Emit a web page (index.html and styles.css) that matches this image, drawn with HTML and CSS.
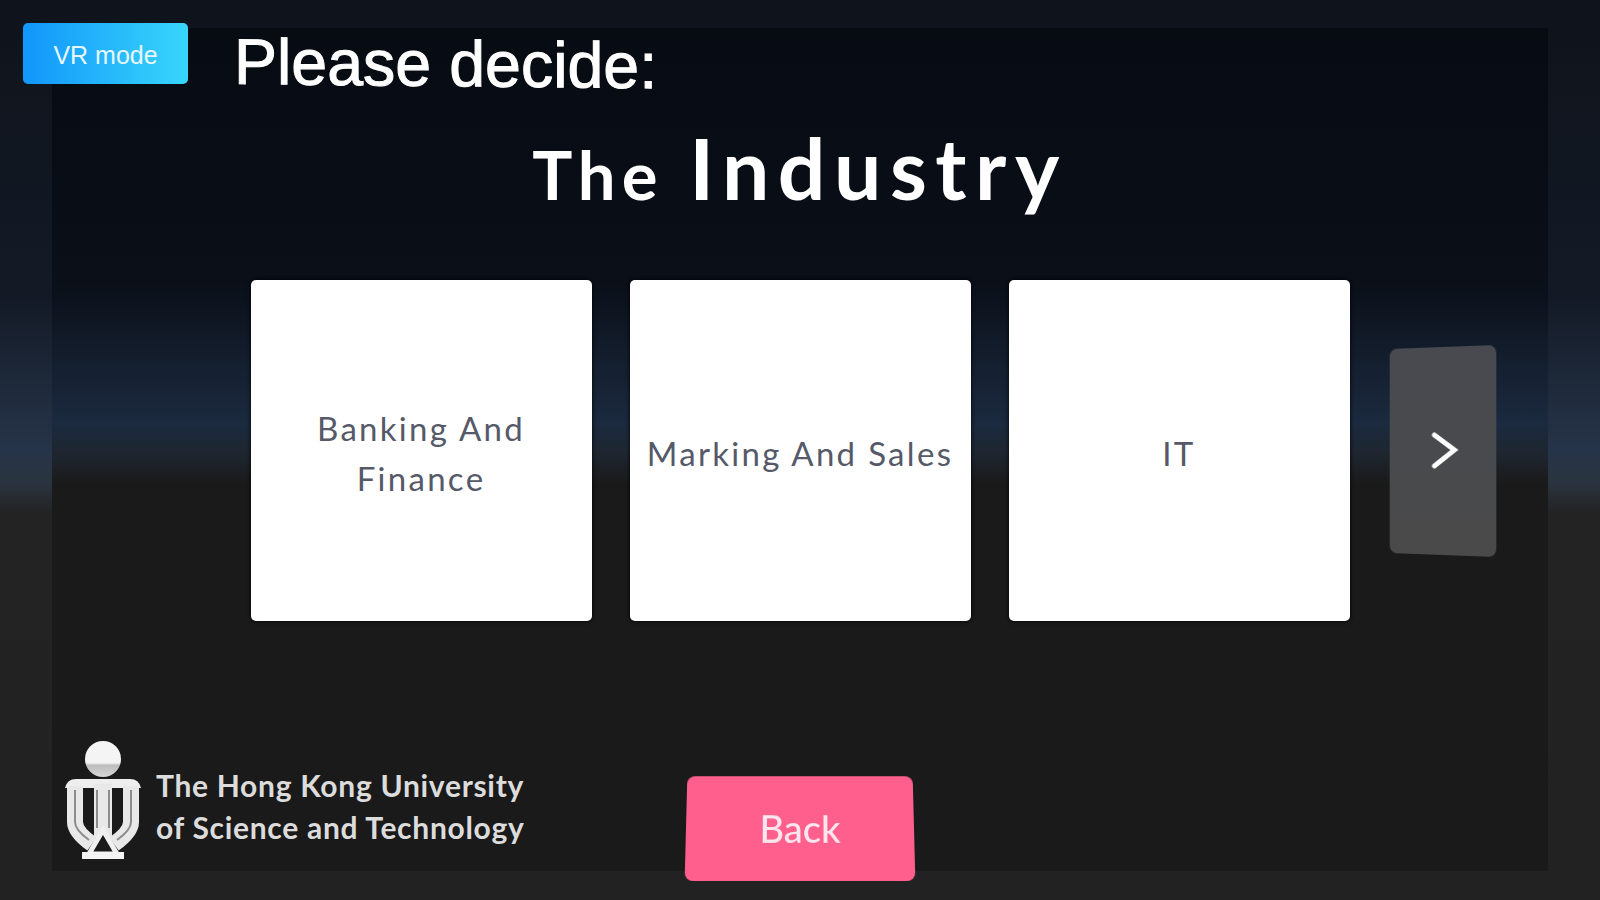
FILE: index.html
```html
<!DOCTYPE html>
<html lang="en">
<head>
    <meta charset="UTF-8">
    <meta name="viewport" content="width=device-width, initial-scale=1.0">
    <title>Please decide</title>
    <link rel="stylesheet" href="styles.css">
</head>
<body>
    <div class="panel"></div>
    <main class="stage">
        <header class="top">
            <button class="vr-btn">VR mode</button>
            <h2 class="prompt">Please decide:</h2>
        </header>
        <h1 class="title"><span class="title-the">The</span> <span class="title-main">Industry</span></h1>
        <section class="choices">
            <div class="cards">
                <div class="card">Banking And<br>Finance</div>
                <div class="card">Marking And Sales</div>
                <div class="card">IT</div>
            </div>
            <button class="next-btn">
                <svg width="28" height="38" viewBox="0 0 28 38" fill="none" stroke="#fff" stroke-width="5" stroke-linecap="round" stroke-linejoin="miter">
                    <path d="M3 3 L24 18 L3 34"/>
                </svg>
            </button>
        </section>
        <footer class="bottom">
            <div class="logo">
                <svg class="logo-mark" width="80" height="124" viewBox="0 0 80 124">
                    <defs>
                        <linearGradient id="ball" x1="0" y1="0" x2="0" y2="1">
                            <stop offset="0.6" stop-color="#f4f4f4"/>
                            <stop offset="0.68" stop-color="#bdbdbd"/>
                            <stop offset="1" stop-color="#d8d8d8"/>
                        </linearGradient>
                    </defs>
                    <circle cx="39" cy="19" r="18" fill="url(#ball)"/>
                    <path d="M1 48 Q3 39 12 39 H66 Q75 39 77 48 Z" fill="#eee"/>
                    <g fill="none" stroke="#e8e8e8" stroke-width="16">
                        <path d="M11 46 V82 Q11 92 28 104"/>
                        <path d="M67 46 V82 Q67 92 50 104"/>
                    </g>
                    <path d="M39 44 V98" fill="none" stroke="#e8e8e8" stroke-width="18"/>
                    <g fill="none" stroke="#8c8c8c" stroke-width="2">
                        <path d="M11 50 V82 Q11 90 25 100"/>
                        <path d="M67 50 V82 Q67 90 53 100"/>
                        <path d="M33 50 V88"/>
                        <path d="M45 50 V88"/>
                    </g>
                    <path d="M39 90 L53 114 H25 Z" fill="#1a1a1a" stroke="#f0f0f0" stroke-width="5"/>
                    <rect x="18" y="112" width="42" height="7" fill="#f4f4f4"/>
                </svg>
                <div class="logo-text">The Hong Kong University<br>of Science and Technology</div>
            </div>
            <button class="back-btn">Back</button>
        </footer>
    </main>
</body>
</html>
```

FILE: styles.css
```css
body {
    margin: 0;
    height: 900px;
    overflow: hidden;
    background: linear-gradient(to bottom, #0f131b 0%, #131a26 33%, #263449 50%, #2a3440 53.5%, #232323 57%, #222222 100%);
    font-family: "Lato", "Liberation Sans", sans-serif;
}

/* darker inset square behind the content */
.panel {
    position: absolute;
    left: 52px;
    top: 28px;
    width: 1496px;
    height: 843px;
    background: linear-gradient(to bottom, #070b12 0%, #0a0f18 30%, #1b2a3f 47%, #1e2630 50.5%, #1a1a1a 54%, #1a1a1a 100%);
}

.stage {
    position: relative;
    display: flex;
    flex-direction: column;
    height: 900px;
}

button {
    border: none;
    padding: 0;
    font-family: inherit;
}

.top {
    display: flex;
    align-items: flex-start;
    gap: 46px;
    padding: 23px 0 0 23px;
    height: 97px;
}

.vr-btn {
    width: 165px;
    height: 61px;
    padding-top: 4px;
    border-radius: 5px;
    background: linear-gradient(to right, #1296fb, #38d6fb);
    color: #e8f6ff;
    font-family: "Liberation Sans", sans-serif;
    font-size: 25px;
}

.prompt {
    margin: 6px 0 0;
    color: #fff;
    font-family: "Liberation Sans", sans-serif;
    font-size: 64.5px;
    font-weight: 400;
    line-height: 70px;
    -webkit-text-stroke: 1px #fff;
    transform: skewY(0.6deg);
}

.title {
    margin: -2px 0 0;
    height: 100px;
    color: #fff;
    font-weight: 700;
    text-align: center;
    line-height: 100px;
    letter-spacing: 6px;
}

.title-the {
    font-size: 67px;
    margin-right: 12px;
}

.title-main {
    font-size: 84px;
    letter-spacing: 8.5px;
}

.choices {
    display: grid;
    grid-template-columns: 1fr auto 1fr;
    align-items: center;
    margin-top: 62px;
}

.cards {
    grid-column: 2;
    display: flex;
    gap: 38px;
}

.card {
    display: flex;
    align-items: center;
    justify-content: center;
    box-sizing: border-box;
    width: 341px;
    height: 341px;
    padding-top: 4px;
    border-radius: 5px;
    background: #fff;
    box-shadow: 0 0 4px #000;
    color: #555968;
    font-size: 33px;
    line-height: 50px;
    letter-spacing: 2.3px;
    text-align: center;
}

.next-btn {
    grid-column: 3;
    justify-self: start;
    display: flex;
    align-items: center;
    justify-content: center;
    width: 112px;
    height: 208px;
    margin-left: 36px;
    padding-left: 5px;
    border-radius: 8px;
    background: linear-gradient(to bottom, #484a50, #4a4a4a);
    transform: perspective(900px) rotateY(-18deg);
}

.bottom {
    display: grid;
    grid-template-columns: 1fr auto 1fr;
    margin-top: 154px;
}

.logo {
    display: flex;
    align-items: flex-start;
    gap: 12px;
    padding-left: 64px;
    margin-top: -35px;
}

.logo-text {
    margin-top: 24px;
    color: #dcdcdc;
    font-size: 30px;
    font-weight: 700;
    line-height: 42px;
    letter-spacing: 0.7px;
    white-space: nowrap;
}

.back-btn {
    width: 228px;
    height: 106px;
    border-radius: 8px;
    background: #ff5f8d;
    color: #ffe6ee;
    font-size: 38px;
    font-weight: 500;
    transform: perspective(700px) rotateX(9deg);
}
```
